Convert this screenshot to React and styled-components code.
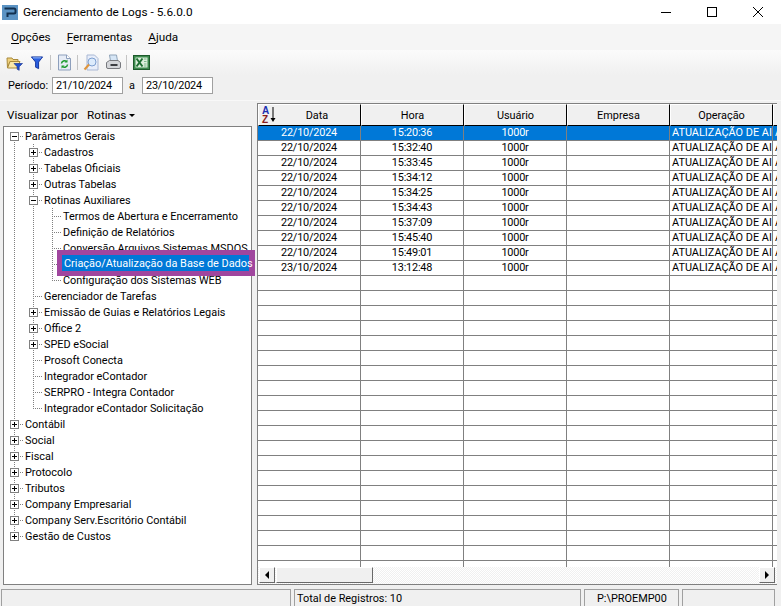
import React from "react";
import styled, { createGlobalStyle } from "styled-components";

const GlobalStyle = createGlobalStyle`
  html, body {
    margin: 0;
    padding: 0;
    background: #f0f0f0;
  }
  * {
    box-sizing: border-box;
  }
`;

const Window = styled.div`
  width: 781px;
  height: 606px;
  display: flex;
  flex-direction: column;
  overflow: hidden;
  background: #f0f0f0;
  color: #000;
  font-family: Roboto, "Liberation Sans", sans-serif;
  font-size: 10.9px;
`;

const TitleBar = styled.div`
  height: 24px;
  flex: none;
  display: flex;
  align-items: center;
  background: #fff;
  padding-left: 2px;
`;

const TitleText = styled.span`
  margin-left: 5px;
  font-size: 11.8px;
  flex: 1;
`;

const WinButton = styled.div`
  width: 46px;
  height: 24px;
  display: flex;
  align-items: center;
  justify-content: center;
`;

const MenuBar = styled.div`
  height: 26px;
  flex: none;
  display: flex;
  align-items: center;
  gap: 16px;
  padding-left: 11px;
  background: #f5f5f5;
  font-size: 11.7px;
`;

const MenuItem = styled.span`
  u {
    text-underline-offset: 2px;
  }
`;

const TopBand = styled.div`
  height: 50px;
  flex: none;
  background: linear-gradient(#fbfbfb, #f0f0f0 50%);
`;

const Toolbar = styled.div`
  height: 25px;
  display: flex;
  align-items: center;
  padding-left: 6px;
`;

const ToolIcon = styled.svg`
  width: ${(p) => p.$size || 16}px;
  height: ${(p) => p.$size || 16}px;
  margin-right: ${(p) => p.$gap || 0}px;
  flex: none;
`;

const Separator = styled.div`
  width: 1px;
  height: 15px;
  background: #c4c4c4;
  margin-right: ${(p) => p.$after}px;
  margin-left: ${(p) => p.$before}px;
`;

const PeriodRow = styled.div`
  display: flex;
  align-items: center;
  height: 17px;
  margin-top: 2px;
  padding-left: 8px;
`;

const PeriodLabel = styled.span`
  width: 44px;
  flex: none;
`;

const DateBox = styled.div`
  width: 71px;
  height: 17px;
  background: #fff;
  border: 1px solid #a0a0a0;
  padding-left: 3px;
  display: flex;
  align-items: center;
  letter-spacing: -0.2px;
`;

const PeriodSep = styled.span`
  width: 19px;
  flex: none;
  padding-left: 6px;
`;

const Body = styled.div`
  flex: 1;
  min-height: 0;
  display: flex;
  padding: 2px 4px 4px 3px;
  background: #f0f0f0;
  border-top: 1px solid #f8f8f8;
`;

const LeftPane = styled.div`
  width: 249px;
  flex: none;
  display: flex;
  flex-direction: column;
`;

const ViewBy = styled.div`
  height: 23px;
  flex: none;
  display: flex;
  align-items: center;
  padding: 1px 0 0 4px;
  font-size: 11.7px;
`;

const ViewValue = styled.span`
  margin-left: 9px;
`;

const Caret = styled.span`
  display: inline-block;
  margin-left: 3px;
  border: 3px solid transparent;
  border-top-color: #000;
  border-bottom: 0;
  vertical-align: 2px;
`;

const TreeBox = styled.div`
  flex: 1;
  background: #fff;
  border: 1px solid #808080;
  padding-top: 1px;
  position: relative;
`;

const Row = styled.div`
  height: 16px;
  display: flex;
  align-items: stretch;
`;

const Guide = styled.div`
  width: 19px;
  flex: none;
  position: relative;
  &::before {
    content: "";
    position: absolute;
    left: 10px;
    top: ${(p) => (p.$start ? "8px" : "0")};
    bottom: ${(p) => (p.$end ? "8px" : "0")};
    width: 1px;
    background: repeating-linear-gradient(#808080 0 1px, transparent 1px 2px);
  }
`;

const Elbow = styled(Guide)`
  &::after {
    content: "";
    position: absolute;
    left: 10px;
    top: 8px;
    width: 9px;
    height: 1px;
    background: repeating-linear-gradient(90deg, #808080 0 1px, transparent 1px 2px);
  }
`;

const Expander = styled.div`
  position: absolute;
  z-index: 1;
  left: 6px;
  top: 4px;
  width: 9px;
  height: 9px;
  background: #fff;
  border: 1px solid #808080;
  &::before {
    content: "";
    position: absolute;
    left: 1px;
    top: 3px;
    width: 5px;
    height: 1px;
    background: #000;
  }
  &::after {
    content: "";
    display: ${(p) => (p.$open ? "none" : "block")};
    position: absolute;
    left: 3px;
    top: 1px;
    width: 1px;
    height: 5px;
    background: #000;
  }
`;

const Label = styled.span`
  margin: 1px 0 0 2px;
  line-height: 16px;
  white-space: nowrap;
`;

const Callout = styled.div`
  position: absolute;
  left: 53px;
  top: 123px;
  width: 198px;
  height: 26px;
  border: 5px solid #a0469e;
  border-right-width: 6px;
  background: #0078d7;
  color: #fff;
  display: flex;
  align-items: center;
  padding: 1px 0 0 2px;
  white-space: nowrap;
`;

const GridPane = styled.div`
  width: 520px;
  flex: none;
  margin-left: 5px;
  display: flex;
  flex-direction: column;
  border: 1px solid #808080;
  border-right: 0;
  background: #fff;
`;

const GridBody = styled.div`
  flex: 1;
  min-height: 0;
  overflow: hidden;
`;

const GridRow = styled.div`
  display: flex;
  height: ${(p) => (p.$header ? "22px" : "15px")};
  background: ${(p) => (p.$selected ? "#0078d7" : "transparent")};
  color: ${(p) => (p.$selected ? "#fff" : "#000")};
`;

const HeaderCell = styled.div`
  width: ${(p) => p.$w}px;
  flex: none;
  position: relative;
  display: flex;
  align-items: center;
  justify-content: center;
  padding-left: ${(p) => p.$pad || 0}px;
  background: #f0f0f0;
  border-top: 1px solid #fff;
  border-left: 1px solid #fff;
  border-right: ${(p) => (p.$last ? "0" : "1px solid #000")};
  border-bottom: 1px solid #000;
`;

const Cell = styled.div`
  width: ${(p) => p.$w}px;
  flex: none;
  overflow: hidden;
  white-space: nowrap;
  border-right: ${(p) => (p.$last ? "0" : "1px solid #808080")};
  border-bottom: 1px solid #808080;
  line-height: 14px;
  text-align: ${(p) => (p.$left ? "left" : "center")};
  padding-left: ${(p) => (p.$left ? "2px" : "0")};
  letter-spacing: ${(p) => (p.$left ? "0" : "-0.2px")};
`;

const SortIcon = styled.svg`
  position: absolute;
  left: 1px;
  top: 1px;
  width: 18px;
  height: 18px;
`;

const HScroll = styled.div`
  height: 17px;
  flex: none;
  display: flex;
  padding-left: 1px;
  background-color: #f8f8f8;
  background-image: repeating-conic-gradient(#fff 0 25%, #f0f0f0 0 50%);
  background-size: 2px 2px;
`;

const ScrollBtn = styled.div`
  width: ${(p) => p.$w || 16}px;
  margin-right: ${(p) => p.$gap || 0}px;
  flex: none;
  height: 16px;
  background: #f0f0f0;
  border-top: 1px solid #fff;
  border-left: 1px solid #fff;
  border-right: 1px solid #696969;
  border-bottom: 1px solid #696969;
  display: flex;
  align-items: center;
  justify-content: center;
`;

const Track = styled.div`
  flex: 1;
`;

const Arrow = styled.span`
  width: 0;
  height: 0;
  border: 4px solid transparent;
  border-left-color: ${(p) => (p.$right ? "#000" : "transparent")};
  border-right-color: ${(p) => (p.$right ? "transparent" : "#000")};
  border-left-width: ${(p) => (p.$right ? "4px" : "0")};
  border-right-width: ${(p) => (p.$right ? "0" : "4px")};
`;

const StatusBar = styled.div`
  height: 17px;
  flex: none;
  display: flex;
  gap: 3px;
  padding-left: 1px;
  background: #f0f0f0;
`;

const StatusCell = styled.div`
  width: ${(p) => p.$w}px;
  flex: none;
  border: 1px solid #a0a0a0;
  border-bottom: 0;
  display: flex;
  align-items: center;
  padding-left: ${(p) => p.$pad || 0}px;
  white-space: nowrap;
`;

const tree = [
  { t: "Parâmetros Gerais", g: 0, exp: "open", first: true },
  { t: "Cadastros", g: 1, exp: "plus" },
  { t: "Tabelas Oficiais", g: 1, exp: "plus" },
  { t: "Outras Tabelas", g: 1, exp: "plus" },
  { t: "Rotinas Auxiliares", g: 1, exp: "open" },
  { t: "Termos de Abertura e Encerramento", g: 2 },
  { t: "Definição de Relatórios", g: 2 },
  { t: "Conversão Arquivos Sistemas MSDOS", g: 2 },
  { t: "", g: 2 },
  { t: "Configuração dos Sistemas WEB", g: 2, last: true },
  { t: "Gerenciador de Tarefas", g: 1 },
  { t: "Emissão de Guias e Relatórios Legais", g: 1, exp: "plus" },
  { t: "Office 2", g: 1, exp: "plus" },
  { t: "SPED eSocial", g: 1, exp: "plus" },
  { t: "Prosoft Conecta", g: 1 },
  { t: "Integrador eContador", g: 1 },
  { t: "SERPRO - Integra Contador", g: 1 },
  { t: "Integrador eContador Solicitação", g: 1, last: true },
  { t: "Contábil", g: 0, exp: "plus" },
  { t: "Social", g: 0, exp: "plus" },
  { t: "Fiscal", g: 0, exp: "plus" },
  { t: "Protocolo", g: 0, exp: "plus" },
  { t: "Tributos", g: 0, exp: "plus" },
  { t: "Company Empresarial", g: 0, exp: "plus" },
  { t: "Company Serv.Escritório Contábil", g: 0, exp: "plus" },
  { t: "Gestão de Custos", g: 0, exp: "plus", last: true },
];

const logs = [
  ["22/10/2024", "15:20:36"],
  ["22/10/2024", "15:32:40"],
  ["22/10/2024", "15:33:45"],
  ["22/10/2024", "15:34:12"],
  ["22/10/2024", "15:34:25"],
  ["22/10/2024", "15:34:43"],
  ["22/10/2024", "15:37:09"],
  ["22/10/2024", "15:45:40"],
  ["22/10/2024", "15:49:01"],
  ["23/10/2024", "13:12:48"],
];

const widths = [103, 103, 103, 103, 103, 4];
const headers = ["Data", "Hora", "Usuário", "Empresa", "Operação", ""];

function Logo() {
  return (
    <svg width="16" height="15" viewBox="0 0 16 15">
      <rect width="16" height="15" fill="#5b93c4" />
      <path d="M2.5 3.5h9.5a1.5 1.5 0 0 1 1.5 1.5v2a1.5 1.5 0 0 1-1.5 1.5H5.5v3.5" fill="none" stroke="#12304f" strokeWidth="2" />
    </svg>
  );
}

function FolderFilterIcon() {
  return (
    <ToolIcon viewBox="0 0 17 17" $size={17} $gap={7}>
      <path d="M1 4h5l1 1.5h5v2H4L1.5 14z" fill="#f1d27c" stroke="#a98a3c" />
      <path d="M1.5 14l2.5-6.5h10L11 14z" fill="#f9e7a9" stroke="#a98a3c" />
      <path d="M8 9.5h8.5l-3.3 3.3v3.5l-2-1v-2.5z" fill="#1f4fd0" stroke="#0d2a8a" strokeWidth="0.6" />
    </ToolIcon>
  );
}

function FilterIcon() {
  return (
    <ToolIcon viewBox="0 0 13 15" $size={14}>
      <path d="M0.5 1h12l-4.3 5.5v7L5 12V6.5z" fill="#2a5fe0" stroke="#10309a" />
      <path d="M2 2h9" stroke="#9ec2ff" />
    </ToolIcon>
  );
}

function RefreshDocIcon() {
  return (
    <ToolIcon viewBox="0 0 14 17" $size={17}>
      <path d="M1 1h8l4 3.5V16H1z" fill="#e6ecf6" stroke="#8d9fbc" />
      <path d="M9 1v3.5h4" fill="#fff" stroke="#8d9fbc" />
      <path d="M4 9.5a3 3 0 0 1 5-2M10 10.5a3 3 0 0 1-5 2" fill="none" stroke="#1c9a2e" strokeWidth="1.5" />
      <path d="M10 5.5v3H7zM4 14.5v-3h3z" fill="#1c9a2e" />
    </ToolIcon>
  );
}

function PreviewIcon() {
  return (
    <ToolIcon viewBox="0 0 17 17" $size={17} $gap={5}>
      <path d="M4 1h7.5L15 4.5V16H4z" fill="#e8eefa" stroke="#a9b8d4" />
      <circle cx="9" cy="8" r="4" fill="#dcebfc" stroke="#7d9fd0" />
      <path d="M6 10.5l-4.5 5" stroke="#e0953a" strokeWidth="2" />
    </ToolIcon>
  );
}

function PrinterIcon() {
  return (
    <ToolIcon viewBox="0 0 17 17" $size={17}>
      <path d="M4.5 1h7l1 6h-7z" fill="#d6e6f6" stroke="#8fa3b8" />
      <path d="M1.5 8.5l3-2h8.5l2.5 2V13a1.5 1.5 0 0 1-1.5 1.5H3A1.5 1.5 0 0 1 1.5 13z" fill="#d4d6da" stroke="#77797e" />
      <rect x="5.5" y="10" width="7" height="2" fill="#3c3e43" />
    </ToolIcon>
  );
}

function ExcelIcon() {
  return (
    <ToolIcon viewBox="0 0 17 17" $size={17}>
      <rect x="0.5" y="1.5" width="16" height="14" fill="#3d8a4e" stroke="#1d5a2b" />
      <rect x="2.5" y="3.5" width="12" height="10" fill="#dcefdc" />
      <path d="M3.5 4.5l6 8M9.5 4.5l-6 8" stroke="#1f6f33" strokeWidth="2" />
      <path d="M11 5h2.5M11 7.5h2.5M11 10h2.5M11 12h2.5" stroke="#7fb98c" />
    </ToolIcon>
  );
}

function TreeRow({ item }) {
  return (
    <Row>
      {Array.from({ length: item.g }).map((_, i) => (
        <Guide key={i} />
      ))}
      <Elbow $start={item.first} $end={item.last}>
        {item.exp && <Expander $open={item.exp === "open"} />}
      </Elbow>
      <Label>{item.t}</Label>
    </Row>
  );
}

export default function App() {
  const emptyRows = Array.from({ length: 20 });
  return (
    <Window>
      <GlobalStyle />
      <TitleBar>
        <Logo />
        <TitleText>Gerenciamento de Logs - 5.6.0.0</TitleText>
        <WinButton>
          <svg width="10" height="10" viewBox="0 0 10 10"><path d="M0 5.5h10" stroke="#000" /></svg>
        </WinButton>
        <WinButton>
          <svg width="10" height="10" viewBox="0 0 10 10"><rect x="0.5" y="0.5" width="9" height="9" fill="none" stroke="#000" /></svg>
        </WinButton>
        <WinButton>
          <svg width="10" height="10" viewBox="0 0 10 10"><path d="M0 0l10 10M10 0L0 10" stroke="#000" /></svg>
        </WinButton>
      </TitleBar>
      <MenuBar>
        <MenuItem><u>O</u>pções</MenuItem>
        <MenuItem><u>F</u>erramentas</MenuItem>
        <MenuItem><u>A</u>juda</MenuItem>
      </MenuBar>
      <TopBand>
        <Toolbar>
          <FolderFilterIcon />
          <FilterIcon />
          <Separator $before={6} $after={5} />
          <RefreshDocIcon />
          <Separator $before={4} $after={5} />
          <PreviewIcon />
          <PrinterIcon />
          <Separator $before={4} $after={6} />
          <ExcelIcon />
        </Toolbar>
        <PeriodRow>
          <PeriodLabel>Período:</PeriodLabel>
          <DateBox>21/10/2024</DateBox>
          <PeriodSep>a</PeriodSep>
          <DateBox>23/10/2024</DateBox>
        </PeriodRow>
      </TopBand>
      <Body>
        <LeftPane>
          <ViewBy>
            Visualizar por
            <ViewValue>Rotinas<Caret /></ViewValue>
          </ViewBy>
          <TreeBox>
            {tree.map((item, i) => (
              <TreeRow key={i} item={item} />
            ))}
            <Callout>Criação/Atualização da Base de Dados</Callout>
          </TreeBox>
        </LeftPane>
        <GridPane>
          <GridRow $header>
            {headers.map((h, i) => (
              <HeaderCell key={i} $w={widths[i]} $pad={i === 0 ? 15 : 0} $last={i === 5}>
                {i === 0 && (
                  <SortIcon viewBox="0 0 18 18">
                    <text x="2" y="8" fontSize="10" fontWeight="700" fill="#1c2fb0" fontFamily="Liberation Sans">A</text>
                    <text x="2" y="17" fontSize="10" fontWeight="700" fill="#8a1c1c" fontFamily="Liberation Sans">Z</text>
                    <path d="M13 1v12" stroke="#000" />
                    <path d="M10.5 12h5L13 16z" fill="#000" />
                  </SortIcon>
                )}
                {h}
              </HeaderCell>
            ))}
          </GridRow>
          <GridBody>
            {logs.map((row, i) => (
              <GridRow key={i} $selected={i === 0}>
                <Cell $w={103}>{row[0]}</Cell>
                <Cell $w={103}>{row[1]}</Cell>
                <Cell $w={103}>1000r</Cell>
                <Cell $w={103} />
                <Cell $w={103} $left>ATUALIZAÇÃO DE AI</Cell>
                <Cell $w={4} $left $last>A</Cell>
              </GridRow>
            ))}
            {emptyRows.map((_, i) => (
              <GridRow key={i}>
                {widths.map((w, j) => (
                  <Cell key={j} $w={w} $last={j === 5} />
                ))}
              </GridRow>
            ))}
          </GridBody>
          <HScroll>
            <ScrollBtn $gap={1}><Arrow /></ScrollBtn>
            <ScrollBtn $w={97} />
            <Track />
            <ScrollBtn $gap={2}><Arrow $right /></ScrollBtn>
          </HScroll>
        </GridPane>
      </Body>
      <StatusBar>
        <StatusCell $w={290} />
        <StatusCell $w={287} $pad={2}>Total de Registros: 10</StatusCell>
        <StatusCell $w={95} $pad={12}>P:\PROEMP00</StatusCell>
        <StatusCell $w={93} />
      </StatusBar>
    </Window>
  );
}
